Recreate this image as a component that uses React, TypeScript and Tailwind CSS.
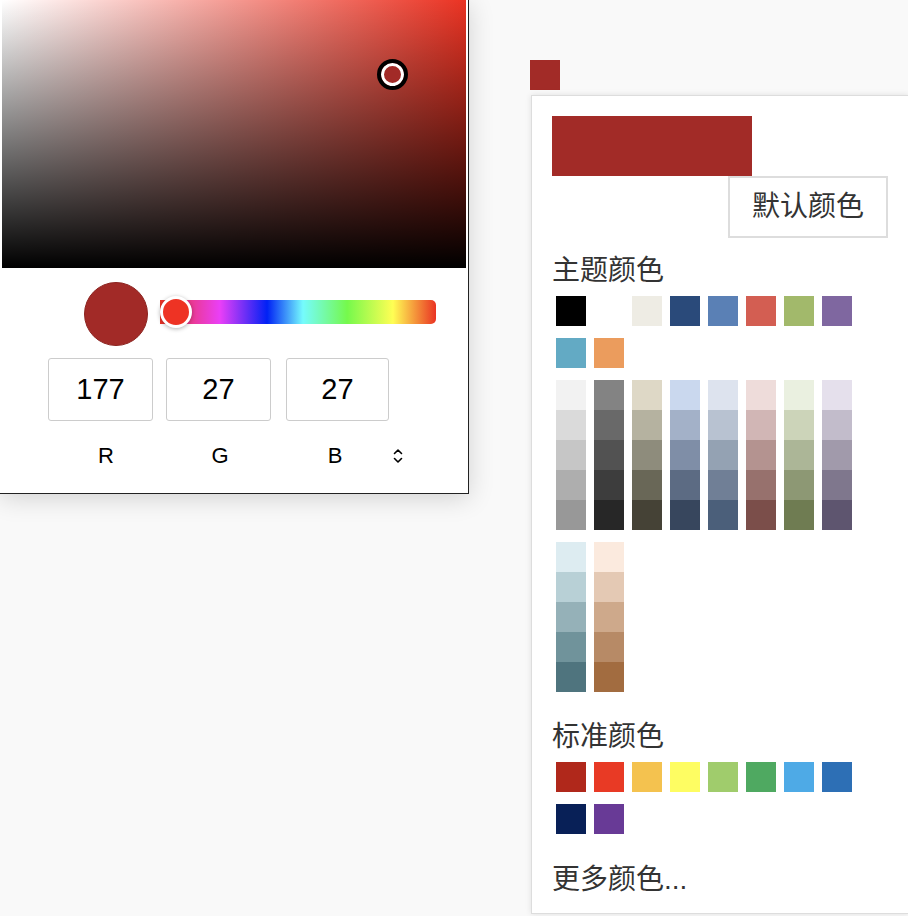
const THEME_COLORS = [
  '#000000', '#ffffff', '#eeece4', '#2a4a7a', '#5a80b5',
  '#d35e52', '#a2b96b', '#7f67a0', '#63aac4', '#eb9c5d',
];

const SHADES: string[][] = [
  ['#f2f2f2', '#dadada', '#c6c6c6', '#aeaeae', '#989898'],
  ['#838383', '#696969', '#525252', '#3d3d3d', '#272727'],
  ['#ded8c6', '#b5b2a0', '#8e8c7c', '#696757', '#454236'],
  ['#cad8ee', '#a3b1c8', '#7f8ea7', '#5c6b83', '#37465d'],
  ['#dde3ee', '#b8c2d1', '#94a2b3', '#707f96', '#4b5f7a'],
  ['#eedcda', '#d1b6b5', '#b49390', '#97716d', '#7b4e4a'],
  ['#eaf0e0', '#ccd4b9', '#acb697', '#8d9874', '#6f7c52'],
  ['#e5e0ec', '#c2bccb', '#a19aab', '#7f778d', '#5e556f'],
  ['#ddecf1', '#b8d0d6', '#95b1b8', '#70939b', '#4f747e'],
  ['#fbeade', '#e4c9b4', '#cea98b', '#b78a66', '#a26c40'],
];

const STANDARD_COLORS = [
  '#b0281b', '#e83a25', '#f4c24f', '#fefd62', '#a0cc6c',
  '#4fa961', '#4eaae6', '#2d6fb5', '#082057', '#683a96',
];

const RGB = [
  { label: 'R', value: '177' },
  { label: 'G', value: '27' },
  { label: 'B', value: '27' },
];

function ColorPicker() {
  return (
    <div className="w-[469px] shrink-0 bg-white border-r border-b border-[#222] pr-[2px] pb-[25px] shadow-[0_4px_24px_rgba(0,0,0,0.16)]">
      {/* Saturation / value area */}
      <div className="relative ml-[2px] w-[464px] h-[268px] bg-[linear-gradient(to_top,#000,transparent),linear-gradient(to_right,#fff,#ea3323)]">
        <div className="absolute left-[375px] top-[59px] w-[31px] h-[31px] rounded-full border-4 border-black bg-[#a22a27] shadow-[inset_0_0_0_3px_#fff]" />
      </div>

      {/* Preview + hue slider */}
      <div className="flex items-start mt-[14px]">
        <div className="ml-[84px] w-[64px] h-[64px] rounded-full bg-[#a22a27] border border-[#8c2420]" />
        <div className="relative ml-[12px] mt-[18px] w-[276px] h-[24px] rounded-r-[5px] bg-[linear-gradient(to_right,#ea3323_0%,#ea3ff7_21.7%,#0021f5_38.8%,#75fbfd_51.8%,#75f94c_67.8%,#fffe54_84.4%,#ea3323_100%)]">
          <div className="absolute left-0 top-[-4px] w-[32px] h-[32px] rounded-full bg-[#ee3324] border-[3px] border-white shadow-[0_1px_4px_rgba(0,0,0,0.3)]" />
        </div>
      </div>

      {/* RGB inputs */}
      <div className="flex mt-[12px] ml-[48px]">
        {RGB.map((c, i) => (
          <div
            key={c.label}
            className={`h-[63px] flex items-center justify-center rounded-[3px] border border-[#cccccc] text-[29px] text-black ${
              i === 0 ? 'w-[105px]' : i === 1 ? 'w-[105px] ml-[13px]' : 'w-[103px] ml-[15px]'
            }`}
          >
            {c.value}
          </div>
        ))}
      </div>

      {/* Labels */}
      <div className="flex items-center h-[24px] mt-[23px] text-[22px] leading-[24px] text-black">
        <span className="ml-[96px] w-[20px] text-center">R</span>
        <span className="ml-[94px] w-[20px] text-center">G</span>
        <span className="ml-[95px] w-[20px] text-center">B</span>
        <svg className="ml-[48px]" width="10" height="16" viewBox="0 0 10 16" fill="none" stroke="#000" strokeWidth="1.6" strokeLinecap="round" strokeLinejoin="round">
          <path d="M1.5 5.5 L5 2 L8.5 5.5" />
          <path d="M1.5 10.5 L5 14 L8.5 10.5" />
        </svg>
      </div>
    </div>
  );
}

function Swatch({ color }: { color: string }) {
  return <div className="w-[30px] h-[30px]" style={{ backgroundColor: color }} />;
}

function ColorDropdown() {
  return (
    <div className="mt-[5px] ml-[1px] w-[378px] bg-white border border-[#dddddd] pt-[20px] px-[20px] pb-[18px] text-[#333] shadow-[0_0_6px_rgba(0,0,0,0.1)]">
      <div className="w-[200px] h-[60px] bg-[#a22b27]" />
      <div className="ml-auto w-[160px] h-[62px] border-2 border-[#dddddd] flex items-center justify-center text-[28px]">
        默认颜色
      </div>

      <div className="mt-[18px] text-[28px] leading-[30px]">主题颜色</div>
      <div className="mt-[10px] ml-[4px] w-[296px] flex flex-wrap gap-x-[8px] gap-y-[12px]">
        {THEME_COLORS.map((c) => (
          <Swatch key={c} color={c} />
        ))}
      </div>
      <div className="mt-[12px] ml-[4px] w-[296px] flex flex-wrap gap-x-[8px] gap-y-[12px]">
        {SHADES.map((col, i) => (
          <div key={i} className="flex flex-col">
            {col.map((c) => (
              <Swatch key={c} color={c} />
            ))}
          </div>
        ))}
      </div>

      <div className="mt-[30px] text-[28px] leading-[30px]">标准颜色</div>
      <div className="mt-[10px] ml-[4px] w-[296px] flex flex-wrap gap-x-[8px] gap-y-[12px]">
        {STANDARD_COLORS.map((c) => (
          <Swatch key={c} color={c} />
        ))}
      </div>

      <div className="mt-[31px] text-[28px] leading-[30px]">更多颜色...</div>
    </div>
  );
}

export default function App() {
  return (
    <div className="w-[908px] h-[916px] overflow-hidden bg-[#f9f9f9] flex items-start font-['Liberation_Sans','Noto_Sans_CJK_SC',sans-serif]">
      <ColorPicker />
      <div className="ml-[61px] pt-[60px] shrink-0">
        <div className="w-[30px] h-[30px] bg-[#a22b27]" />
        <ColorDropdown />
      </div>
    </div>
  );
}
